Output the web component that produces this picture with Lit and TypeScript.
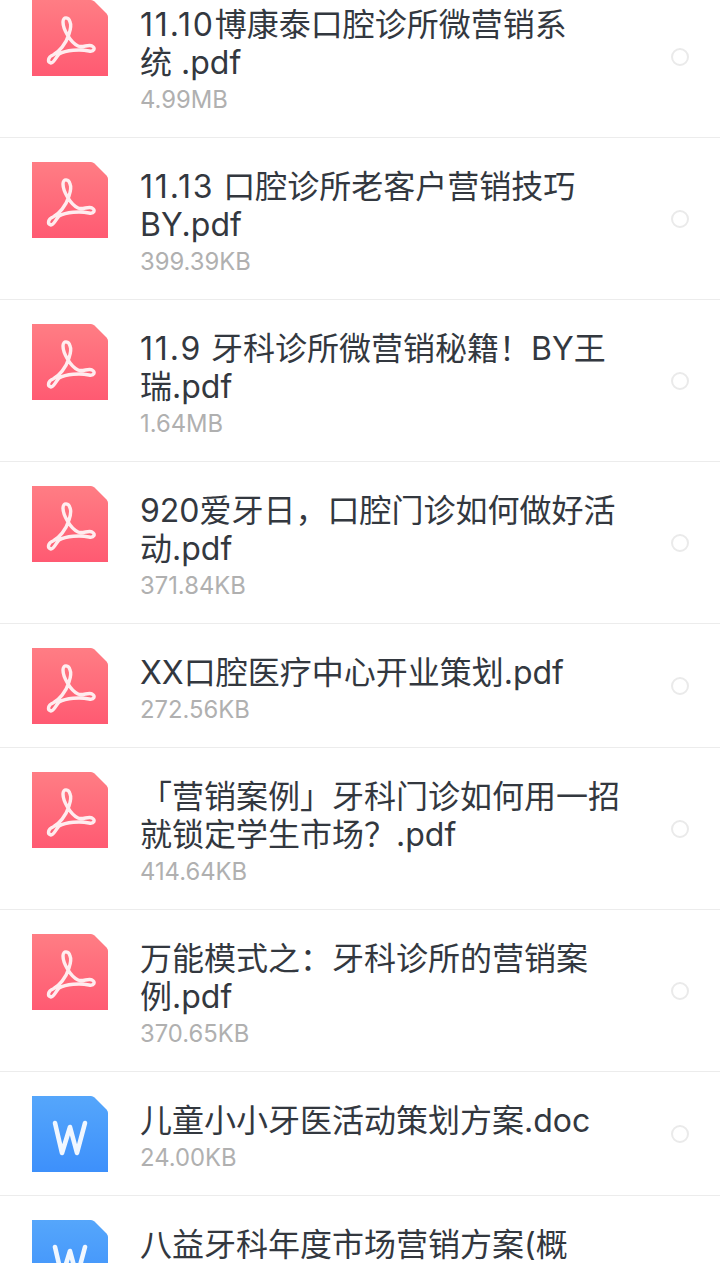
import { LitElement, html, css, svg } from 'lit';
import { customElement } from 'lit/decorators.js';

type FileItem = { lines: string[]; size?: string; kind: 'pdf' | 'doc' };

const FILES: FileItem[] = [
  { lines: ['11.10博康泰口腔诊所微营销系', '统 .pdf'], size: '4.99MB', kind: 'pdf' },
  { lines: ['11.13 口腔诊所老客户营销技巧', 'BY.pdf'], size: '399.39KB', kind: 'pdf' },
  { lines: ['11.9 牙科诊所微营销秘籍！BY王', '瑞.pdf'], size: '1.64MB', kind: 'pdf' },
  { lines: ['920爱牙日，口腔门诊如何做好活', '动.pdf'], size: '371.84KB', kind: 'pdf' },
  { lines: ['XX口腔医疗中心开业策划.pdf'], size: '272.56KB', kind: 'pdf' },
  { lines: ['「营销案例」牙科门诊如何用一招', '就锁定学生市场？.pdf'], size: '414.64KB', kind: 'pdf' },
  { lines: ['万能模式之：牙科诊所的营销案', '例.pdf'], size: '370.65KB', kind: 'pdf' },
  { lines: ['儿童小小牙医活动策划方案.doc'], size: '24.00KB', kind: 'doc' },
  // last row runs off the bottom of the screen, only its first line shows
  { lines: ['八益牙科年度市场营销方案(概'], kind: 'doc' },
];

const SHEET = 'M3 0H59Q61 0 62.5 1.5L74.5 13.5Q76 15 76 17V76H0V0Z';

const pdfGlyph = svg`<path d="M19 63C15 62 16 57 21 55C27 52 34 44 37 34C39 28 39 24 38 22C37 17 31 16 31 22C31 29 38 42 46 46C50 48 57 44 60 46C64 48 62 52 57 51C48 49 34 50 27 54C24 57 22 63 19 63Z" fill="none" stroke="#fff" stroke-opacity=".88" stroke-width="3.4" stroke-linejoin="round"/>`;
const docGlyph = svg`<path d="M23 27L30 57L38 31L45 57L53 27" fill="none" stroke="#fff" stroke-opacity=".92" stroke-width="4.6" stroke-linecap="round" stroke-linejoin="round"/>`;

@customElement('file-icon')
class FileIcon extends LitElement {
  static properties = { kind: { type: String } };
  kind: 'pdf' | 'doc' = 'pdf';

  static styles = css`
    :host {
      display: block;
      width: 76px;
      height: 76px;
    }
    svg {
      display: block;
    }
  `;

  render() {
    const pdf = this.kind === 'pdf';
    const id = pdf ? 'g-pdf' : 'g-doc';
    return html`<svg width="76" height="76" viewBox="0 0 76 76">
      <defs>
        <linearGradient id=${id} x1="0" y1="0" x2="0" y2="1">
          <stop offset="0" stop-color=${pdf ? '#ff7d84' : '#55a6fb'} />
          <stop offset="1" stop-color=${pdf ? '#ff5a72' : '#3d90fb'} />
        </linearGradient>
      </defs>
      <path d=${SHEET} fill="url(#${id})" />
      ${pdf ? pdfGlyph : docGlyph}
    </svg>`;
  }
}

@customElement('app-root')
export class AppRoot extends LitElement {
  static styles = css`
    :host {
      display: block;
      width: 720px;
      height: 1263px;
      overflow: hidden;
      background: #fff;
      font-family: 'Inter', 'Noto Sans CJK SC', sans-serif;
    }
    .list {
      margin-top: -24px;
    }
    .row {
      display: flex;
      align-items: center;
      padding: 24px 31px 0 32px;
      border-bottom: 1px solid #ececec;
      box-sizing: border-box;
    }
    .row.clipped {
      height: 162px;
    }
    .row file-icon {
      align-self: flex-start;
      flex: none;
    }
    .body {
      flex: 1;
      align-self: flex-start;
      margin-left: 32px;
      min-width: 0;
      padding-bottom: 19px;
    }
    .title {
      font-size: 32px;
      line-height: 38px;
      color: #33383f;
      white-space: nowrap;
      margin-top: 6px;
    }
    .num {
      letter-spacing: 1.8px;
    }
    .size {
      font-size: 23.8px;
      line-height: 36px;
      color: #b0b0b0;
    }
    .radio {
      flex: none;
      width: 18px;
      height: 18px;
      box-sizing: border-box;
      border: 2px solid #eaeaea;
      border-radius: 50%;
      margin-top: -24px;
    }
  `;

  // the 1s in Inter are narrower than in the reference font
  private line(text: string) {
    const m = text.match(/^11\.\d+/);
    return m ? html`<span class="num">${m[0]}</span>${text.slice(m[0].length)}` : text;
  }

  render() {
    return html`<div class="list">
      ${FILES.map(
        (f) => html`<div class="row ${f.size ? '' : 'clipped'}">
          <file-icon .kind=${f.kind}></file-icon>
          <div class="body">
            <div class="title">${f.lines.map((l, i) => html`${i ? html`<br />` : ''}${this.line(l)}`)}</div>
            ${f.size ? html`<div class="size">${f.size}</div>` : ''}
          </div>
          <div class="radio"></div>
        </div>`
      )}
    </div>`;
  }
}
